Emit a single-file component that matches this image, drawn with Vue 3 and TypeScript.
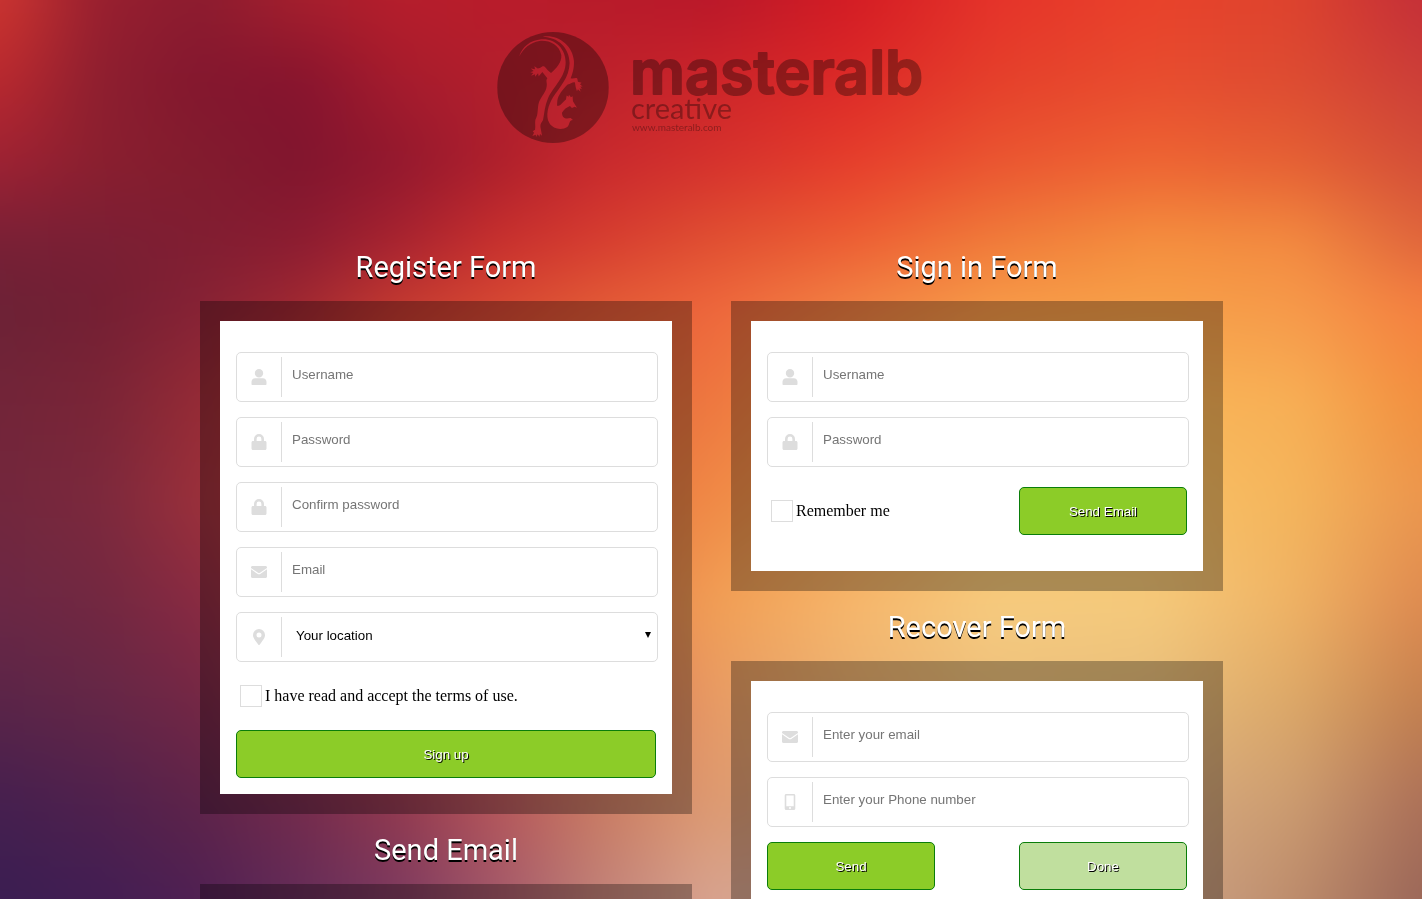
<script setup lang="ts">
import { reactive } from 'vue'

type IconName = 'user' | 'lock' | 'mail' | 'pin' | 'phone'

interface Field {
  id: string
  label: string
  type: string
  icon: IconName
}

const icons: Record<IconName, string> = {
  user: 'M8 0a4.2 4.2 0 1 1 0 8.400a4.200 4.200 0 0 1 0-8.400zM4.200 9.200h7.600c2.200 0 3.700 1.500 3.700 3.600v2.200c0 .6-.4 1-1 1h-13c-.6 0-1-.4-1-1v-2.200c0-2.100 1.500-3.600 3.700-3.600z',
  lock: 'M3 7V5a5 5 0 0 1 10 0v2h1c.9 0 1.500.6 1.500 1.500v6c0 .9-.6 1.500-1.500 1.500H2c-.9 0-1.500-.6-1.500-1.500v-6C.5 7.600 1.100 7 2 7zM5.600 7h4.800V5a2.400 2.400 0 0 0-4.800 0z',
  mail: 'M0 3.500C0 2.700.6 2 1.500 2h13c.9 0 1.500.7 1.500 1.500v.4L9 8.800c-.7.500-1.300.5-2 0L0 3.900zM0 5.300l6.400 4.500c1.100.7 2.100.7 3.200 0L16 5.300v7.200c0 .9-.6 1.500-1.500 1.500h-13C.6 14 0 13.400 0 12.500z',
  pin: 'M8 0a6 6 0 0 1 6 6c0 2.600-1.200 4-5.200 9.600a1 1 0 0 1-1.600 0C3.200 10 2 8.600 2 6a6 6 0 0 1 6-6zM8 3.500a2.500 2.500 0 1 0 0 5a2.500 2.500 0 0 0 0-5z',
  phone: 'M4.200 0h7.600c.9 0 1.500.6 1.500 1.500v13c0 .9-.6 1.500-1.500 1.500H4.200c-.9 0-1.500-.6-1.500-1.500v-13C2.700.6 3.300 0 4.200 0zM4.300 1.600v10.600h7.400V1.600zM8 13.100a1 1 0 1 0 0 2a1 1 0 0 0 0-2z',
}

const registerFields: Field[] = [
  { id: 'reg-user', label: 'Username', type: 'text', icon: 'user' },
  { id: 'reg-pass', label: 'Password', type: 'password', icon: 'lock' },
  { id: 'reg-confirm', label: 'Confirm password', type: 'password', icon: 'lock' },
  { id: 'reg-email', label: 'Email', type: 'email', icon: 'mail' },
]
const signinFields: Field[] = [
  { id: 'in-user', label: 'Username', type: 'text', icon: 'user' },
  { id: 'in-pass', label: 'Password', type: 'password', icon: 'lock' },
]
const recoverFields: Field[] = [
  { id: 'rec-email', label: 'Enter your email', type: 'email', icon: 'mail' },
  { id: 'rec-phone', label: 'Enter your Phone number', type: 'tel', icon: 'phone' },
]

const values = reactive<Record<string, string>>({})

// Colour mesh of the backdrop: stops across the window, rows down it.
const stops = [0, 7, 14, 21, 28, 35, 42, 50, 60, 70, 81, 91, 100]
const mesh: { at: number; colors: string }[] = [
  { at: 0, colors: 'cc3530 981f2f 8c1c2f a51f2d b61e2c b91c2b b81b2a b9182a d41c24 e5332a e9422b dd432e c42f38' },
  { at: 9, colors: 'b9292f 8d1f2f 83172f 86142e a51c2d b31f2d bd222d cc2529 dd2a28 e5402b e84d2f dd4c32 cc3f38' },
  { at: 18, colors: '9e2233 8a1f2f 821c2e 80152e 92182e ad1f2c c8292d d5312d e63e2c ea5531 ee6433 e56034 d44f38' },
  { at: 27, colors: '782036 7a1f35 801e32 8b1c31 a82330 c8302e d63d30 e05032 ed6034 f07c3a f4903f f38b40 e0663c' },
  { at: 34, colors: '6c2236 741f33 852235 a02832 c43a30 d64833 e25a36 ee663c f28244 f79a48 f79f48 f6994a f58040' },
  { at: 45, colors: '722539 7a2537 952b36 b03533 cc4636 dd5a3a e56a3d ee7840 f59448 f8ac52 fab658 f7b056 f2903f' },
  { at: 56, colors: '72273d 7c293d 9a303b b53a3a cf4d3c dd6040 e67442 f08a46 f5a152 f9ba60 f9c268 f4b55c eb964e' },
  { at: 67, colors: '6b2845 722841 882a42 a83842 c44e46 d8644c e47a50 f19e54 f6b76c f6cc80 f5ca7c efb264 de8a50' },
  { at: 78, colors: '5a2548 642747 732745 8e3048 aa4050 c45858 d87058 e79a64 ecb273 eec07c e8be7c dca868 c4804f' },
  { at: 89, colors: '46204f 50214d 5e2449 742b4c 92394e b5565a c87a62 de9a70 d8a07c d8a880 d8ac80 cc9c70 ac7058' },
  { at: 100, colors: '3a1e52 421e53 4f2053 632c58 7c3a60 a2586a c08078 d8a490 cca08e c8a08a cda588 bd8c6c 9a6658' },
]

// The layers reach past the window on every side so that the blur has no pale rim.
const bleed = 60
const place = (p: number) => `calc(${p}% + ${bleed - (2 * bleed * p) / 100}px)`

const layers = mesh.map((row, i) => {
  const list = row.colors.split(' ').map((c, n) => `#${c} ${place(stops[n])}`)
  const mask = i
    ? `linear-gradient(to bottom, transparent ${place(mesh[i - 1].at)}, #000 ${place(row.at)})`
    : 'none'
  return { backgroundImage: `linear-gradient(to right, ${list.join(', ')})`, maskImage: mask }
})
</script>

<template>
  <div class="page">
    <div class="backdrop" aria-hidden="true">
      <div class="mesh">
        <div v-for="(layer, i) in layers" :key="i" class="layer" :style="layer"></div>
      </div>
    </div>

    <header class="header">
      <a class="brand" href="#">
        <svg class="emblem" viewBox="51 35 336 334" aria-hidden="true">
          <defs>
            <mask id="lizard">
              <rect x="51" y="35" width="336" height="334" fill="#fff" />
              <g fill="#000">
                <path d="M117 109C126 80 150 60 184 57C226 54 257 86 257 126C257 170 221 198 204 234C194 257 193 279 189 300C186 307 180 311 181 320L183 331L186 347L180 342L178 350L173 343L168 351L167 344L157 348L162 338L158 334L165 329C167 318 164 309 166 299C176 283 171 263 177 246C184 228 198 216 200 198C202 187 196 182 202 174L187 155L176 168L174 159L165 170L165 162L153 167L160 158L151 156L161 152L152 145L165 147L163 138L173 145C184 145 185 136 193 139C200 144 203 153 213 158C229 145 246 126 244 104C237 72 207 59 178 62C150 66 130 85 117 109Z" />
                <path d="M188 49C234 42 278 75 282 122C283 145 277 162 272 174C281 178 286 171 292 175L294 185L305 188L300 192L308 199L301 199L306 207L299 204L302 215L294 207L291 213L287 200L285 187C278 184 272 193 263 193C249 207 234 225 232 242L231 257C242 259 248 246 258 238L260 226L266 230L267 224L273 231L278 228L279 243L291 263L284 260L276 264L270 258C260 262 252 268 246 278C247 295 256 297 272 294L279 300C266 300 271 313 262 321C246 331 219 328 208 309C195 286 205 254 219 231C239 200 268 173 269 128C268 83 236 51 188 49Z" />
              </g>
            </mask>
          </defs>
          <ellipse cx="219" cy="202" rx="168" ry="167" mask="url(#lizard)" />
        </svg>
        <svg class="wordmark" viewBox="0 0 293 111" role="img" aria-label="masteralb creative">
          <text class="name" x="-2" y="62">masteralb</text>
          <text class="tag" x="-1" y="87">creative</text>
          <text class="site" x="0" y="99">www.masteralb.com</text>
        </svg>
      </a>
    </header>

    <main class="columns">
      <div class="column">
        <h2 class="title">Register Form</h2>
        <section class="panel">
          <form class="body" @submit.prevent>
            <label v-for="f in registerFields" :key="f.id" class="field" :for="f.id">
              <span class="mark">
                <svg viewBox="0 0 16 16" aria-hidden="true"><path fill-rule="evenodd" :d="icons[f.icon]" /></svg>
              </span>
              <input :id="f.id" v-model="values[f.id]" :type="f.type" :placeholder="f.label" :aria-label="f.label" />
            </label>
            <label class="field" for="reg-location">
              <span class="mark">
                <svg viewBox="0 0 16 16" aria-hidden="true"><path fill-rule="evenodd" :d="icons.pin" /></svg>
              </span>
              <select id="reg-location" aria-label="Your location">
                <option>Your location</option>
              </select>
              <svg class="arrow" viewBox="0 0 6 6" aria-hidden="true"><path d="M0 0h6L3 6z" /></svg>
            </label>
            <div class="terms">
              <input id="terms" type="checkbox" />
              <label for="terms">I have read and accept the terms of use.</label>
            </div>
            <div class="actions">
              <button class="button wide" type="submit">Sign up</button>
            </div>
          </form>
        </section>

        <h2 class="title">Send Email</h2>
        <section class="panel"></section>
      </div>

      <div class="column">
        <h2 class="title">Sign in Form</h2>
        <section class="panel">
          <form class="body roomy" @submit.prevent>
            <label v-for="f in signinFields" :key="f.id" class="field" :for="f.id">
              <span class="mark">
                <svg viewBox="0 0 16 16" aria-hidden="true"><path fill-rule="evenodd" :d="icons[f.icon]" /></svg>
              </span>
              <input :id="f.id" v-model="values[f.id]" :type="f.type" :placeholder="f.label" :aria-label="f.label" />
            </label>
            <div class="actions signin">
              <div class="remember">
                <input id="remember" type="checkbox" />
                <label for="remember">Remember me</label>
              </div>
              <button class="button" type="submit">Send Email</button>
            </div>
          </form>
        </section>

        <h2 class="title">Recover Form</h2>
        <section class="panel">
          <form class="body" @submit.prevent>
            <label v-for="f in recoverFields" :key="f.id" class="field" :for="f.id">
              <span class="mark">
                <svg viewBox="0 0 16 16" aria-hidden="true"><path fill-rule="evenodd" :d="icons[f.icon]" /></svg>
              </span>
              <input :id="f.id" v-model="values[f.id]" :type="f.type" :placeholder="f.label" :aria-label="f.label" />
            </label>
            <div class="actions">
              <button class="button" type="submit">Send</button>
              <button class="button done" type="button">Done</button>
            </div>
          </form>
        </section>
      </div>
    </main>
  </div>
</template>

<style>
body {
  background: #b5403a;
}
</style>

<style scoped>
.page {
  min-height: 100vh;
  font-family: 'Liberation Serif', 'Times New Roman', serif;
}

.backdrop {
  position: fixed;
  inset: 0;
  z-index: -1;
  overflow: hidden;
}

.mesh {
  position: absolute;
  inset: -60px;
  filter: blur(20px);
}

.layer {
  position: absolute;
  inset: 0;
}

.header {
  display: flex;
  justify-content: center;
  padding: 32px 0 88px;
}

.brand {
  display: flex;
  gap: 23px;
  color: #000;
  text-decoration: none;
  opacity: 0.33;
}

.emblem {
  width: 112px;
  height: 111px;
}

.wordmark {
  width: 293px;
  height: 111px;
  overflow: visible;
}

.name {
  font-family: Inter, 'Open Sans', sans-serif;
  font-size: 61px;
  font-weight: 600;
  stroke: #000;
  stroke-width: 2px;
  stroke-linejoin: round;
}

.tag {
  font-family: Lato, sans-serif;
  font-size: 29px;
  font-weight: 400;
}

.site {
  font-family: Lato, sans-serif;
  font-size: 10px;
}

.columns {
  display: grid;
  grid-template-columns: 1fr 1fr;
  gap: 39px;
  padding: 0 199px 0 200px;
}

.title {
  margin: 0;
  padding-top: 2px;
  height: 68px;
  font-family: Roboto, 'Open Sans', sans-serif;
  font-size: 29px;
  line-height: 68px;
  font-weight: 400;
  text-align: center;
  color: #fff;
  text-shadow: 0 2px 0 #000;
}

.panel {
  padding: 20px;
  background: rgba(0, 0, 0, 0.31);
}

.body {
  display: flex;
  flex-direction: column;
  gap: 15px;
  padding: 31px 14px 16px 16px;
  background: #fff;
}

.roomy {
  padding-bottom: 36px;
}

.field {
  display: flex;
  height: 50px;
  box-sizing: border-box;
  border: 1px solid #ddd;
  border-radius: 5px;
  background: #fff;
}

.mark {
  display: flex;
  align-items: center;
  justify-content: center;
  width: 45px;
  height: 40px;
  margin-top: 4px;
  box-sizing: border-box;
  border-right: 1px solid #ddd;
}

.mark svg {
  width: 16px;
  height: 16px;
  fill: #ddd;
}

.field input,
.field select {
  flex: 1;
  min-width: 0;
  height: 42px;
  padding: 0 10px;
  border: 0;
  outline: 0;
  background: transparent;
  font-family: 'Liberation Sans', Arial, sans-serif;
}

.field input::placeholder {
  color: #757575;
}

.field select {
  appearance: none;
  height: 44px;
  padding: 0 14px;
  color: #000;
}

.arrow {
  width: 6px;
  height: 6px;
  margin: 19px 6px 0 0;
}

.terms {
  display: flex;
  align-items: center;
  gap: 3px;
  padding: 8px 4px;
  font-size: 16px;
  line-height: 22px;
}

.remember {
  display: flex;
  align-items: center;
  gap: 3px;
  padding-left: 4px;
  font-size: 16px;
  line-height: 22px;
}

.terms input,
.remember input {
  appearance: none;
  width: 22px;
  height: 22px;
  margin: 0;
  border: 1px solid #ddd;
  background: #fff;
}

.terms input:checked,
.remember input:checked {
  background: #8ccc28;
}

.actions {
  display: flex;
  justify-content: space-between;
  padding-right: 2px;
}

.signin {
  padding-top: 5px;
}

.button {
  width: 40%;
  height: 48px;
  padding: 0;
  border: 1px solid #0a7d0a;
  border-radius: 5px;
  background: #8ccc28;
  color: #fff;
  font-family: 'Liberation Sans', Arial, sans-serif;
  text-shadow: 1px 1px 0 #000;
  cursor: pointer;
}

.wide {
  width: 100%;
}

.done {
  background: #c0df9e;
}
</style>
